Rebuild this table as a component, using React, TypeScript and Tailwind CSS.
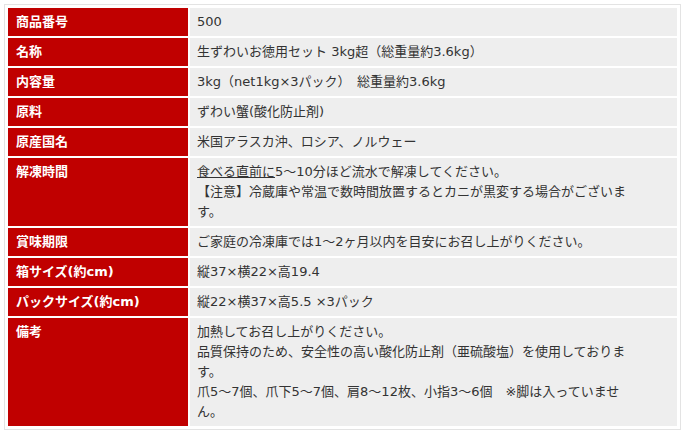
const rows: { label: string; value: React.ReactNode; lines?: number }[] = [
  { label: "商品番号", value: "500" },
  { label: "名称", value: "生ずわいお徳用セット 3kg超（総重量約3.6kg）" },
  { label: "内容量", value: "3kg（net1kg×3パック）　総重量約3.6kg" },
  { label: "原料", value: "ずわい蟹(酸化防止剤)" },
  { label: "原産国名", value: "米国アラスカ沖、ロシア、ノルウェー" },
  {
    label: "解凍時間",
    value: (
      <>
        <span className="underline">食べる直前に</span>5～10分ほど流水で解凍してください。
        <br />
        【注意】冷蔵庫や常温で数時間放置するとカニが黒変する場合がございま
        <br />
        す。
      </>
    ),
  },
  { label: "賞味期限", value: "ご家庭の冷凍庫では1～2ヶ月以内を目安にお召し上がりください。" },
  { label: "箱サイズ(約cm)", value: "縦37×横22×高19.4" },
  { label: "パックサイズ(約cm)", value: "縦22×横37×高5.5 ×3パック" },
  {
    label: "備考",
    value: (
      <>
        加熱してお召し上がりください。
        <br />
        品質保持のため、安全性の高い酸化防止剤（亜硫酸塩）を使用しておりま
        <br />
        す。
        <br />
        爪5～7個、爪下5～7個、肩8～12枚、小指3～6個　※脚は入っていませ
        <br />
        ん。
      </>
    ),
  },
];

export default function App() {
  return (
    <div className="w-[685px] h-[432px] bg-white pt-[4px] pl-[4px] font-['DejaVu_Sans','Noto_Sans_CJK_JP',sans-serif]">
      <div className="w-[677px] border border-[#e3e3e3] p-[3px]">
        <div className="grid grid-cols-[180px_1fr] gap-[2px] text-[13px] leading-[20px]">
          {rows.map((r) => (
            <div key={r.label} className="contents">
              <div className="bg-[#c00000] text-white font-bold pl-[8px] pt-[4px] pb-[4px]">
                {r.label}
              </div>
              <div className="bg-[#eeeeee] text-[#333333] pl-[7px] pr-[6px] pt-[4px] pb-[4px] whitespace-nowrap">
                {r.value}
              </div>
            </div>
          ))}
        </div>
      </div>
    </div>
  );
}
